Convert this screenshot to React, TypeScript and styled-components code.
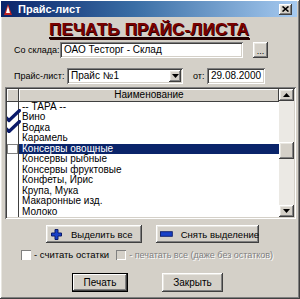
import React from 'react'
import styled, { createGlobalStyle } from 'styled-components'

const GlobalStyle = createGlobalStyle`
    html, body {
        margin: 0;
        padding: 0;
        background: #d4d0c8;
    }
    * {
        box-sizing: border-box;
    }
`

const raised = `
    background: #d4d0c8;
    box-shadow: inset -1px -1px #404040, inset 1px 1px #ffffff, inset -2px -2px #808080, inset 2px 2px #e8e6e0;
`

const sunken = `
    background: #ffffff;
    box-shadow: inset 1px 1px #808080, inset -1px -1px #ffffff, inset 2px 2px #404040, inset -2px -2px #d4d0c8;
`

const Window = styled.div`
    width: 300px;
    height: 299px;
    padding: 1px 3px 3px 1px;
    display: flex;
    flex-direction: column;
    font-family: 'Liberation Sans', Arial, sans-serif;
    font-size: 10px;
    color: #000;
    ${raised}
`

const TitleBar = styled.div`
    height: 16px;
    flex: none;
    display: flex;
    align-items: center;
    padding: 0 3px 0 3px;
    background: linear-gradient(90deg, #0a246a 0%, #3a6ea5 45%, #a6caf0 100%);
    color: #fff;
    font-weight: bold;
    font-size: 11px;
`

const TitleText = styled.span`
    flex: 1;
    margin-left: 6px;
`

const CloseButton = styled.div`
    width: 13px;
    height: 11px;
    display: flex;
    align-items: center;
    justify-content: center;
    margin-right: 2px;
    ${raised}
`

const Heading = styled.div`
    margin-top: 3px;
    height: 20px;
    flex: none;
    text-align: center;
    font-size: 17px;
    line-height: 19px;
    font-weight: bold;
    color: #7a0000;
    text-decoration: underline;
    text-decoration-color: #200000;
    text-decoration-thickness: 2px;
    text-underline-offset: 2px;
    text-shadow: 1px 1px 0 #2a0000;
    letter-spacing: 0.2px;
`

const FieldRow = styled.div<{ $top: number }>`
    display: flex;
    align-items: center;
    flex: none;
    margin-top: ${(p) => p.$top}px;
    padding-left: 13px;
    height: 16px;
`

const Label = styled.span<{ $w: number }>`
    width: ${(p) => p.$w}px;
    flex: none;
    font-size: 9px;
    white-space: nowrap;
`

const TextBox = styled.div<{ $w: number }>`
    width: ${(p) => p.$w}px;
    height: 16px;
    padding: 2px 0 0 4px;
    line-height: 12px;
    white-space: nowrap;
    overflow: hidden;
    ${sunken}
`

const ComboBox = styled(TextBox)`
    display: flex;
    padding-right: 2px;
`

const ComboText = styled.span`
    flex: 1;
`

const ComboArrow = styled.div`
    width: 12px;
    height: 12px;
    display: flex;
    align-items: center;
    justify-content: center;
    ${raised}
`

const SmallButton = styled.div`
    width: 15px;
    height: 16px;
    margin-left: 10px;
    display: flex;
    align-items: flex-end;
    justify-content: center;
    padding-bottom: 3px;
    font-size: 9px;
    line-height: 8px;
    ${raised}
`

const Grid = styled.div`
    margin: 3px 0 0 4px;
    width: 291px;
    height: 132px;
    flex: none;
    padding: 2px;
    display: flex;
    ${sunken}
`

const Table = styled.div`
    flex: 1;
    display: flex;
    flex-direction: column;
    overflow: hidden;
`

const HeaderRow = styled.div`
    display: flex;
    height: 12.5px;
    flex: none;
`

const HeaderCell = styled.div<{ $w?: number }>`
    ${(p) => (p.$w ? `width: ${p.$w}px; flex: none;` : 'flex: 1;')}
    text-align: center;
    line-height: 12px;
    box-shadow: inset -1px -1px #404040, inset 1px 1px #ffffff;
    background: #d4d0c8;
`

const Row = styled.div<{ $selected?: boolean }>`
    display: flex;
    height: 10.5px;
    line-height: 10.5px;
    flex: none;
    background: ${(p) => (p.$selected ? '#0a246a' : '#fff')};
    color: ${(p) => (p.$selected ? '#fff' : '#000')};
`

const Indicator = styled.div<{ $selected?: boolean }>`
    position: relative;
    width: 12px;
    flex: none;
    background: #fff;
    border-right: 1px solid #404040;
    ${(p) => (p.$selected ? 'box-shadow: inset 0 0 0 1px #808080;' : '')}
`

const Check = styled.svg`
    position: absolute;
    left: -4px;
    top: -3px;
`

const Cell = styled.div`
    flex: 1;
    padding-left: 3px;
    white-space: nowrap;
`

const ScrollBar = styled.div`
    width: 15px;
    flex: none;
    display: flex;
    flex-direction: column;
    background: #ebe9e4;
`

const ScrollButton = styled.div<{ $h: number }>`
    height: ${(p) => p.$h}px;
    flex: none;
    display: flex;
    align-items: center;
    justify-content: center;
    ${raised}
`

const ScrollTrack = styled.div`
    flex: 1;
    display: flex;
    flex-direction: column;
`

const Thumb = styled.div`
    height: 17px;
    margin-top: 41px;
    margin-bottom: auto;
    ${raised}
`

const ActionRow = styled.div`
    display: flex;
    flex: none;
    margin: 6px 0 0 45px;
    gap: 14px;
`

const ActionButton = styled.div<{ $w: number }>`
    width: ${(p) => p.$w}px;
    height: 18px;
    display: flex;
    align-items: center;
    padding-left: 4px;
    gap: 8px;
    font-size: 9.5px;
    white-space: nowrap;
    ${raised}
`

const OptionsRow = styled.div`
    display: flex;
    align-items: center;
    flex: none;
    margin: 6px 0 0 20px;
    height: 11px;
`

const CheckBox = styled.div<{ $disabled?: boolean }>`
    width: 10px;
    height: 10px;
    flex: none;
    background: ${(p) => (p.$disabled ? '#d4d0c8' : '#fff')};
    box-shadow: inset 1px 1px #808080, inset -1px -1px #ffffff;
`

const OptionLabel = styled.span<{ $disabled?: boolean }>`
    margin: 0 7px 0 3px;
    font-size: ${(p) => (p.$disabled ? 9 : 9.5)}px;
    white-space: nowrap;
    color: ${(p) => (p.$disabled ? '#808080' : '#000')};
    text-shadow: ${(p) => (p.$disabled ? '1px 1px 0 #fff' : 'none')};
`

const FooterRow = styled.div`
    display: flex;
    flex: none;
    margin: 13px 0 0 71px;
    gap: 34px;
`

const DialogButton = styled.div<{ $w: number; $default?: boolean }>`
    width: ${(p) => p.$w}px;
    height: 19px;
    display: flex;
    align-items: center;
    justify-content: center;
    font-size: 10px;
    ${raised}
    ${(p) =>
        p.$default
            ? 'box-shadow: inset 0 0 0 1px #000, inset -2px -2px #404040, inset 2px 2px #ffffff, inset -3px -3px #808080;'
            : ''}
`

const items = [
    { name: '-- ТАРА --' },
    { name: 'Вино', checked: true },
    { name: 'Водка', checked: true },
    { name: 'Карамель' },
    { name: 'Консервы овощные', selected: true },
    { name: 'Консервы рыбные' },
    { name: 'Консервы фруктовые' },
    { name: 'Конфеты, Ирис' },
    { name: 'Крупа, Мука' },
    { name: 'Макаронные изд.' },
    { name: 'Молоко' },
]

const CheckMark = () => (
    <Check width="18" height="14" viewBox="0 0 18 14">
        <path d="M1.5 7 L6 11.5 L16.5 1.5" fill="none" stroke="#0a1a6a" strokeWidth="3.2" strokeLinecap="round" strokeLinejoin="round" />
    </Check>
)

const Arrow = ({ up }: { up?: boolean }) => (
    <svg width="7" height="4" viewBox="0 0 7 4">
        <path d={up ? 'M0 4 L3.5 0 L7 4 Z' : 'M0 0 L7 0 L3.5 4 Z'} fill="#000" />
    </svg>
)

const App = () => (
    <>
        <GlobalStyle />
        <Window>
            <TitleBar>
                <svg width="8" height="11" viewBox="0 0 8 11">
                    <path d="M4 0 L8 11 L0 11 Z" fill="#c02020" />
                    <path d="M4 2 L6 9 L2 9 Z" fill="#ffffff" />
                </svg>
                <TitleText>Прайс-лист</TitleText>
                <CloseButton>
                    <svg width="7" height="6" viewBox="0 0 7 6">
                        <path d="M0.5 0.5 L6.5 5.5 M6.5 0.5 L0.5 5.5" stroke="#000" strokeWidth="1.6" />
                    </svg>
                </CloseButton>
            </TitleBar>
            <Heading>ПЕЧАТЬ ПРАЙС-ЛИСТА</Heading>
            <FieldRow $top={2}>
                <Label $w={46}>Со склада:</Label>
                <TextBox $w={183}>ОАО Тесторг - Склад</TextBox>
                <SmallButton>...</SmallButton>
            </FieldRow>
            <FieldRow $top={10}>
                <Label $w={53}>Прайс-лист:</Label>
                <ComboBox $w={116}>
                    <ComboText>Прайс №1</ComboText>
                    <ComboArrow>
                        <Arrow />
                    </ComboArrow>
                </ComboBox>
                <Label $w={24} style={{ paddingLeft: 10 }}>от:</Label>
                <TextBox $w={58}>29.08.2000</TextBox>
            </FieldRow>
            <Grid>
                <Table>
                    <HeaderRow>
                        <HeaderCell $w={12} />
                        <HeaderCell>Наименование</HeaderCell>
                    </HeaderRow>
                    {items.map((item) => (
                        <Row key={item.name} $selected={item.selected}>
                            <Indicator $selected={item.selected}>{item.checked && <CheckMark />}</Indicator>
                            <Cell>{item.name}</Cell>
                        </Row>
                    ))}
                </Table>
                <ScrollBar>
                    <ScrollButton $h={12}>
                        <Arrow up />
                    </ScrollButton>
                    <ScrollTrack>
                        <Thumb />
                    </ScrollTrack>
                    <ScrollButton $h={12}>
                        <Arrow />
                    </ScrollButton>
                </ScrollBar>
            </Grid>
            <ActionRow>
                <ActionButton $w={96} style={{ paddingLeft: 5, gap: 9 }}>
                    <svg width="11" height="11" viewBox="0 0 11 11">
                        <path d="M4 0.5 H7 V4 H10.5 V7 H7 V10.5 H4 V7 H0.5 V4 H4 Z" fill="#1840c8" stroke="#0a1a6a" strokeWidth="1" />
                    </svg>
                    Выделить все
                </ActionButton>
                <ActionButton $w={103}>
                    <svg width="14" height="6" viewBox="0 0 14 6">
                        <rect x="0.5" y="0.5" width="13" height="5" fill="#1840c8" stroke="#0a1a6a" />
                    </svg>
                    Снять выделение
                </ActionButton>
            </ActionRow>
            <OptionsRow>
                <CheckBox />
                <OptionLabel>- считать остатки</OptionLabel>
                <CheckBox $disabled />
                <OptionLabel $disabled>- печатать все (даже без остатков)</OptionLabel>
            </OptionsRow>
            <FooterRow>
                <DialogButton $w={56} $default>
                    Печать
                </DialogButton>
                <DialogButton $w={61}>Закрыть</DialogButton>
            </FooterRow>
        </Window>
    </>
)

export default App
